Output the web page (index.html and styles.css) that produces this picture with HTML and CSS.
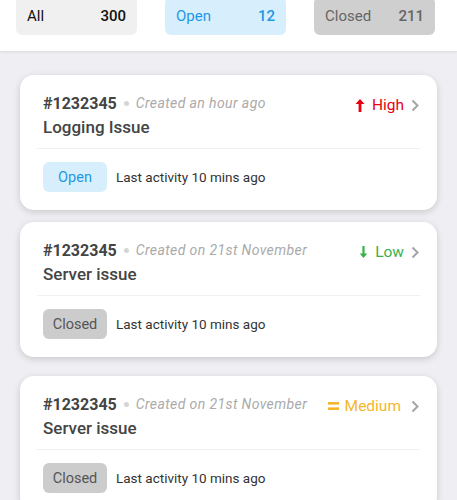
FILE: index.html
```html
<!DOCTYPE html>
<html lang="en">
<head>
    <meta charset="UTF-8">
    <meta name="viewport" content="width=device-width, initial-scale=1.0">
    <title>Tickets</title>
    <link rel="stylesheet" href="styles.css">
</head>
<body>
    <div class="filters">
        <div class="tab tab-all"><span>All</span><span class="count">300</span></div>
        <div class="tab tab-open"><span>Open</span><span class="count">12</span></div>
        <div class="tab tab-closed"><span>Closed</span><span class="count">211</span></div>
    </div>

    <div class="ticket-list">
        <div class="ticket">
            <div class="ticket-head">
                <div class="ticket-info">
                    <div class="ticket-meta">
                        <span class="ticket-id">#1232345</span>
                        <span class="dot"></span>
                        <span class="created">Created an hour ago</span>
                    </div>
                    <div class="ticket-title">Logging Issue</div>
                </div>
                <div class="priority high">
                    <svg width="10" height="15" viewBox="0 0 10 15"><path d="M5 1 L9.5 6 H6.4 V14 H3.6 V6 H0.5 Z" fill="currentColor"/></svg>
                    <span>High</span>
                </div>
                <svg class="chevron" width="8" height="13" viewBox="0 0 8 13"><path d="M1.5 1.5 L6.5 6.5 L1.5 11.5" fill="none" stroke="currentColor" stroke-width="2"/></svg>
            </div>
            <div class="ticket-foot">
                <span class="badge badge-open">Open</span>
                <span class="activity">Last activity 10 mins ago</span>
            </div>
        </div>

        <div class="ticket">
            <div class="ticket-head">
                <div class="ticket-info">
                    <div class="ticket-meta">
                        <span class="ticket-id">#1232345</span>
                        <span class="dot"></span>
                        <span class="created">Created on 21st November</span>
                    </div>
                    <div class="ticket-title">Server issue</div>
                </div>
                <div class="priority low">
                    <svg width="9" height="14" viewBox="0 0 9 14"><path d="M3.4 1 H5.6 V8.5 H8.3 L4.5 13 L0.7 8.5 H3.4 Z" fill="currentColor"/></svg>
                    <span>Low</span>
                </div>
                <svg class="chevron" width="8" height="13" viewBox="0 0 8 13"><path d="M1.5 1.5 L6.5 6.5 L1.5 11.5" fill="none" stroke="currentColor" stroke-width="2"/></svg>
            </div>
            <div class="ticket-foot">
                <span class="badge badge-closed">Closed</span>
                <span class="activity">Last activity 10 mins ago</span>
            </div>
        </div>

        <div class="ticket ticket-spaced">
            <div class="ticket-head">
                <div class="ticket-info">
                    <div class="ticket-meta">
                        <span class="ticket-id">#1232345</span>
                        <span class="dot"></span>
                        <span class="created">Created on 21st November</span>
                    </div>
                    <div class="ticket-title">Server issue</div>
                </div>
                <div class="priority medium">
                    <svg width="11" height="10" viewBox="0 0 11 10"><rect x="0" y="1" width="11" height="2.6" fill="currentColor"/><rect x="0" y="6.4" width="11" height="2.6" fill="currentColor"/></svg>
                    <span>Medium</span>
                </div>
                <svg class="chevron" width="8" height="13" viewBox="0 0 8 13"><path d="M1.5 1.5 L6.5 6.5 L1.5 11.5" fill="none" stroke="currentColor" stroke-width="2"/></svg>
            </div>
            <div class="ticket-foot">
                <span class="badge badge-closed">Closed</span>
                <span class="activity">Last activity 10 mins ago</span>
            </div>
        </div>
    </div>
</body>
</html>
```

FILE: styles.css
```css
body {
    font-family: Roboto, 'Liberation Sans', sans-serif;
    background-color: #efeff3;
    margin: 0;
    overflow: hidden;
}

.filters {
    background-color: white;
    display: flex;
    gap: 28px;
    padding: 0 16px;
    height: 51px;
    box-shadow: 0 1px 3px rgba(0, 0, 0, 0.1);
}

.tab {
    width: 121px;
    height: 38px;
    margin-top: -3px;
    box-sizing: border-box;
    padding: 0 11px;
    border-radius: 6px;
    display: flex;
    justify-content: space-between;
    align-items: center;
    font-size: 15px;
}

.tab .count {
    font-weight: 500;
}

.tab-all {
    background-color: #f0f0f0;
    color: #111;
}

.tab-open {
    background-color: #d7effd;
    color: #1f97e3;
}

.tab-closed {
    background-color: #cfcfcf;
    color: #666;
}

.ticket-list {
    padding: 24px 20px;
    display: flex;
    flex-direction: column;
    gap: 12px;
}

.ticket {
    background-color: white;
    border-radius: 14px;
    box-shadow: 0 2px 7px rgba(0, 0, 0, 0.16);
}

.ticket-spaced {
    margin-top: 7px;
}

.ticket-head {
    display: flex;
    align-items: flex-start;
    padding: 18px 1px 10px 6px;
    border-bottom: 1px solid #f0f0f0;
    margin: 0 17px;
}

.ticket-info {
    flex: 1;
}

.ticket-meta {
    display: flex;
    align-items: center;
    height: 20px;
}

.ticket-id {
    font-size: 16px;
    font-weight: bold;
    color: #444;
}

.dot {
    width: 5px;
    height: 5px;
    border-radius: 50%;
    background-color: #d5d5d5;
    margin: 0 7px;
}

.created {
    font-size: 14px;
    font-style: italic;
    letter-spacing: 0.4px;
    color: #aaa;
}

.ticket-title {
    font-size: 17px;
    font-weight: 500;
    color: #444;
    margin-top: 3px;
    line-height: 22px;
}

.priority {
    display: flex;
    align-items: center;
    gap: 7px;
    font-size: 15.5px;
    height: 24px;
    margin-right: 7px;
}

.high {
    color: #e80010;
}

.low {
    color: #38b24a;
}

.medium {
    color: #f4b62c;
    gap: 6px;
    margin-right: 10px;
}

.chevron {
    color: #a5a5a5;
    margin-top: 6px;
}

.ticket-foot {
    display: flex;
    align-items: center;
    gap: 9px;
    padding: 13px 23px 18px;
}

.badge {
    width: 64px;
    height: 30px;
    border-radius: 6px;
    display: flex;
    align-items: center;
    justify-content: center;
    font-size: 14.5px;
}

.badge-open {
    background-color: #d7effd;
    color: #1f97e3;
}

.badge-closed {
    background-color: #cccccc;
    color: #555;
}

.activity {
    font-size: 13.5px;
    color: #333;
}
```
